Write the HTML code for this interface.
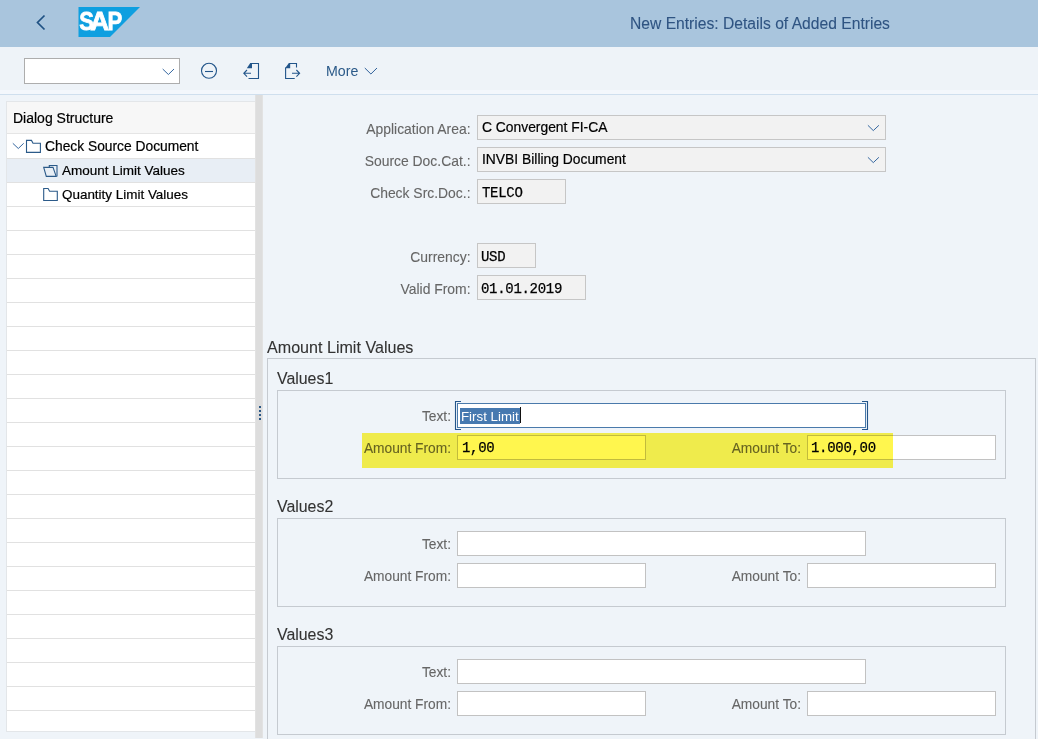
<!DOCTYPE html>
<html><head><meta charset="utf-8">
<style>
*{box-sizing:border-box;margin:0;padding:0}
html,body{width:1038px;height:739px;overflow:hidden;background:#eff4f9;font-family:"Liberation Sans",sans-serif;color:#000}
.a{position:absolute}
#hdr{left:0;top:0;width:1038px;height:47px;background:#a9c5dd}
#title{-webkit-text-stroke:0.1px #2f5482;left:630px;top:14.5px;font-size:15.65px;color:#2f5482;white-space:nowrap;line-height:18px}
#tb{left:0;top:47px;width:1038px;height:47px;background:#eef3f8}
#tbline{left:0;top:94px;width:1038px;height:1px;background:#cfdfee}
.txt{white-space:nowrap;line-height:16px}
div{-webkit-text-stroke:0.2px currentColor}
/* left panel */
#lp{left:6px;top:101px;width:250px;height:631px;background:#fff;border:1px solid #e3e6e9}
#lph{left:7px;top:102px;width:248px;height:32px;background:#f7f7f7;border-bottom:1px solid #e5e5e5}
.row{left:7px;width:248px;height:24px;border-bottom:1px solid #e1e1e1}
#split{left:255px;top:95px;width:8px;height:643px;background:#dddddd;border-left:1px solid #e2e2e2;border-right:1px solid #e2e2e2}
.dot{left:259px;width:2px;height:2px;background:#2a5785}
/* form */
.lbl{-webkit-text-stroke:0.1px #666;color:#666;font-size:13.9px;white-space:nowrap;line-height:16px;text-align:right}
.fld{border:1px solid #c6c6c6;background:#f2f2f2}
.fldw{border:1px solid #c2c2c2;background:#fff}
.val{font-size:13.85px;white-space:nowrap;line-height:16px;color:#000}
.mono{-webkit-text-stroke:0.25px #000;font-family:"Liberation Mono",monospace;font-size:14px;letter-spacing:-0.3px;white-space:nowrap;line-height:16px;color:#000}
.box{border:1px solid #c5cad0}
.gt{-webkit-text-stroke:0.1px #333;font-size:15.9px;color:#333;white-space:nowrap;line-height:18px}
</style></head><body>
<div id="hdr" class="a"></div>
<!-- back chevron -->
<svg class="a" style="left:0;top:0" width="200" height="47">
  <path d="M44.5,15.5 L37.5,22.5 L44.5,29.5" fill="none" stroke="#1f5183" stroke-width="1.7"/>
  <polygon points="78.5,7 140,7 110,37 78.5,37" fill="#0e9fe0"/>
  <g font-family="Liberation Sans" font-weight="bold" font-size="26.1" fill="#fff" stroke="#fff" stroke-width="0.8">
    <text transform="translate(79.16,30.2) scale(0.84,1)">S</text>
    <text transform="translate(90.25,30.2)">A</text>
    <text transform="translate(107.42,30.2) scale(0.847,1)">P</text>
  </g>
</svg>
<div id="title" class="a">New Entries: Details of Added Entries</div>

<div id="tb" class="a"></div>
<div class="a" style="left:0;top:90px;width:1038px;height:4px;background:#f3f7fc"></div>
<div id="tbline" class="a"></div>
<!-- toolbar combobox -->
<div class="a fldw" style="left:24px;top:58px;width:156px;height:26px;border-color:#adadad"></div>
<svg class="a" style="left:0;top:47px" width="400" height="47">
  <g fill="none" stroke="#22558a" stroke-width="1.1">
    <path d="M162.7,22 L168.4,27.5 L174,22" stroke="#3567a0" stroke-width="1"/>
    <circle cx="209" cy="23.8" r="7.5"/>
    <path d="M205,24.5 H213"/>
    <!-- prev doc -->
    <path d="M250.5,16.5 H258.5 V31.5 H248.5"/>
    <path d="M243.8,26.3 H251 M247,23 L243.8,26.3 L247,29.6"/>
    <!-- next doc -->
    <path d="M289,16.5 H296.5 V20.5 M285.6,20.5 V31.5 H294.7"/>
    <path d="M292,26.3 H299.6 M296.4,23 L299.6,26.3 L296.4,29.6"/>
    <path d="M364.8,21 L370.9,27 L377,21" stroke="#2f609a" stroke-width="1"/>
  </g>
  <path d="M250.3,16 H252 V21.2 H246.8 Z" fill="#22558a"/>
  <path d="M288.9,16 H290.2 V21.2 H285 Z" fill="#22558a"/>
</svg>
<div class="a txt" style="left:326px;top:63px;font-size:14.2px;color:#2b5a89;-webkit-text-stroke:0">More</div>

<!-- left panel -->
<div id="lp" class="a"></div>
<div id="lph" class="a"></div>
<div class="a txt" style="left:13px;top:110px;font-size:14px;color:#000">Dialog Structure</div>
<div class="a row" style="top:135px"></div>
<div class="a row" style="top:159px;background:#e8eef5"></div>
<div class="a row" style="top:183px"></div>
<div class="a row" style="top:207px"></div>
<div class="a row" style="top:231px"></div>
<div class="a row" style="top:255px"></div>
<div class="a row" style="top:279px"></div>
<div class="a row" style="top:303px"></div>
<div class="a row" style="top:327px"></div>
<div class="a row" style="top:351px"></div>
<div class="a row" style="top:375px"></div>
<div class="a row" style="top:399px"></div>
<div class="a row" style="top:423px"></div>
<div class="a row" style="top:447px"></div>
<div class="a row" style="top:471px"></div>
<div class="a row" style="top:495px"></div>
<div class="a row" style="top:519px"></div>
<div class="a row" style="top:543px"></div>
<div class="a row" style="top:567px"></div>
<div class="a row" style="top:591px"></div>
<div class="a row" style="top:615px"></div>
<div class="a row" style="top:639px"></div>
<div class="a row" style="top:663px"></div>
<div class="a row" style="top:687px"></div>
<svg class="a" style="left:0;top:130px" width="70" height="80">
  <g fill="none" stroke="#2b5a89" stroke-width="1.1">
    <path d="M12.8,13.3 L18.3,18.5 L23.7,13.3" stroke="#3567a0" stroke-width="1"/>
    <path d="M26.5,22.4 V10.4 H31.5 L33,13.3 H40.4 V22.4 Z"/>
    <path d="M49.3,37.7 V35.5 H57 V46.4"/>
    <path d="M43.7,37.4 H53 L56.2,46.4 H46.3 Z"/>
    <path d="M43.7,70.5 V58.5 H48.1 L49.6,61.2 H57.3 V70.5 Z"/>
  </g>
</svg>
<div class="a txt" style="left:45px;top:138.5px;font-size:13.8px">Check Source Document</div>
<div class="a txt" style="left:62px;top:162.5px;font-size:13.5px">Amount Limit Values</div>
<div class="a txt" style="left:62px;top:186.5px;font-size:13.45px">Quantity Limit Values</div>

<div id="split" class="a"></div>
<div class="a dot" style="top:406px"></div>
<div class="a dot" style="top:410px"></div>
<div class="a dot" style="top:414px"></div>
<div class="a dot" style="top:418px"></div>

<!-- header form -->
<div class="a lbl" style="left:300.5px;width:170px;top:121px">Application Area:</div>
<div class="a fld" style="left:477px;top:115px;width:409px;height:25px"></div>
<div class="a val" style="left:482px;top:119px">C Convergent FI-CA</div>
<div class="a lbl" style="left:300.5px;width:170px;top:153px">Source Doc.Cat.:</div>
<div class="a fld" style="left:477px;top:147px;width:409px;height:25px"></div>
<div class="a val" style="left:482px;top:151px">INVBI Billing Document</div>
<svg class="a" style="left:860px;top:110px" width="30" height="70">
  <g fill="none" stroke="#3567a0" stroke-width="1">
    <path d="M7.9,15.3 L13.3,20.6 L18.9,15.3"/>
    <path d="M7.9,47.3 L13.3,52.6 L18.9,47.3"/>
  </g>
</svg>
<div class="a lbl" style="left:300.5px;width:170px;top:185px">Check Src.Doc.:</div>
<div class="a fld" style="left:477px;top:179px;width:89px;height:25px"></div>
<div class="a mono" style="left:482px;top:185px">TELCO</div>

<div class="a lbl" style="left:300.5px;width:170px;top:249px">Currency:</div>
<div class="a fld" style="left:477px;top:243px;width:59px;height:25px"></div>
<div class="a mono" style="left:481px;top:249px">USD</div>
<div class="a lbl" style="left:300.5px;width:170px;top:281px">Valid From:</div>
<div class="a fld" style="left:477px;top:275px;width:109px;height:25px"></div>
<div class="a mono" style="left:481px;top:281px">01.01.2019</div>

<!-- Amount limit values group -->
<div class="a gt" style="left:267px;top:338px;font-size:16.1px">Amount Limit Values</div>
<div class="a box" style="left:267px;top:358px;width:769px;height:400px"></div>

<!-- Values1 -->
<div class="a gt" style="left:277px;top:370px">Values1</div>
<div class="a box" style="left:277px;top:390px;width:729px;height:89px"></div>
<div class="a lbl" style="left:300px;width:151px;top:409px;font-size:13.75px">Text:</div>
<div class="a fldw" style="left:457px;top:403px;width:409px;height:25px;border-color:#4a7aab"></div>
<svg class="a" style="left:450px;top:396px" width="425" height="40">
  <g fill="none" stroke="#24558a" stroke-width="1.1">
    <path d="M11,5.5 H5.5 V33.5 H11"/>
    <path d="M412,5.5 H417.5 V33.5 H412"/>
  </g>
</svg>
<div class="a" style="left:460px;top:408px;width:60px;height:16px;background:#4679b0"></div>
<div class="a val" style="left:461px;top:409px;color:#fff;font-size:13.3px;-webkit-text-stroke:0">First Limit</div>
<div class="a" style="left:519.5px;top:407px;width:1.2px;height:16px;background:#111"></div>
<div class="a lbl" style="left:300px;width:151px;top:441px;font-size:13.75px">Amount From:</div>
<div class="a fldw" style="left:457px;top:435px;width:189px;height:25px"></div>
<div class="a mono" style="left:462px;top:440px">1,00</div>
<div class="a lbl" style="left:650px;width:151px;top:441px;font-size:13.75px">Amount To:</div>
<div class="a fldw" style="left:807px;top:435px;width:189px;height:25px"></div>
<div class="a mono" style="left:811px;top:440px">1.000,00</div>

<!-- Values2 -->
<div class="a gt" style="left:277px;top:498px">Values2</div>
<div class="a box" style="left:277px;top:518px;width:729px;height:89px"></div>
<div class="a lbl" style="left:300px;width:151px;top:537px;font-size:13.75px">Text:</div>
<div class="a fldw" style="left:457px;top:531px;width:409px;height:25px"></div>
<div class="a lbl" style="left:300px;width:151px;top:569px;font-size:13.75px">Amount From:</div>
<div class="a fldw" style="left:457px;top:563px;width:189px;height:25px"></div>
<div class="a lbl" style="left:650px;width:151px;top:569px;font-size:13.75px">Amount To:</div>
<div class="a fldw" style="left:807px;top:563px;width:189px;height:25px"></div>

<!-- Values3 -->
<div class="a gt" style="left:277px;top:626px">Values3</div>
<div class="a box" style="left:277px;top:646px;width:729px;height:89px"></div>
<div class="a lbl" style="left:300px;width:151px;top:665px;font-size:13.75px">Text:</div>
<div class="a fldw" style="left:457px;top:659px;width:409px;height:25px"></div>
<div class="a lbl" style="left:300px;width:151px;top:697px;font-size:13.75px">Amount From:</div>
<div class="a fldw" style="left:457px;top:691px;width:189px;height:25px"></div>
<div class="a lbl" style="left:650px;width:151px;top:697px;font-size:13.75px">Amount To:</div>
<div class="a fldw" style="left:807px;top:691px;width:189px;height:25px"></div>

<!-- highlighter -->
<div class="a" style="left:362px;top:433px;width:531px;height:35px;background:#fff64e;mix-blend-mode:multiply"></div>
</body></html>
